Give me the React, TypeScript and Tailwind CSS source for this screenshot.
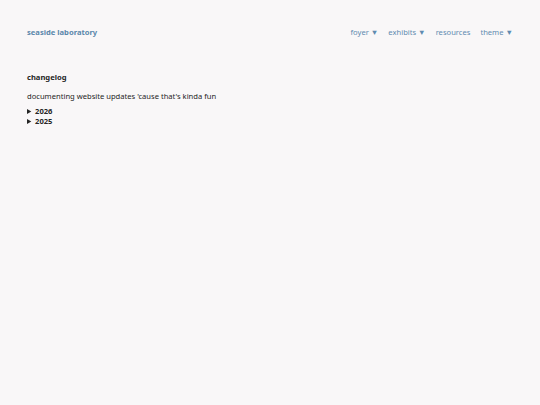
export default function App() {
  const nav = [
    { label: 'foyer', menu: true },
    { label: 'exhibits', menu: true },
    { label: 'resources', menu: false },
    { label: 'theme', menu: true },
  ];
  return (
    <div
      className="min-h-[405px] bg-[#f9f7f8] text-[#262626]"
      style={{ fontFamily: '"Noto Sans", sans-serif' }}
    >
      <header className="flex items-center justify-between px-[27px] pt-[26px]">
        <a className="text-[7.6px] font-bold text-[#5b87ab] leading-[12px]">seaside laboratory</a>
        <nav className="flex gap-[10px] text-[7.6px] text-[#5f8bb0] leading-[12px]">
          {nav.map((n) => (
            <span key={n.label}>
              {n.label}
              {n.menu && ' ▼'}
            </span>
          ))}
        </nav>
      </header>
      <main className="px-[27px] pt-[33px]">
        <h1 className="text-[7.6px] font-bold leading-[12px]">changelog</h1>
        <p className="mt-[7px] text-[7.6px] leading-[12px]">documenting website updates 'cause that's kinda fun</p>
        <div className="mt-[4px] text-[7.6px] font-bold leading-[10px]">
          <details>
            <summary>2026</summary>
          </details>
          <details>
            <summary>2025</summary>
          </details>
        </div>
      </main>
    </div>
  );
}
